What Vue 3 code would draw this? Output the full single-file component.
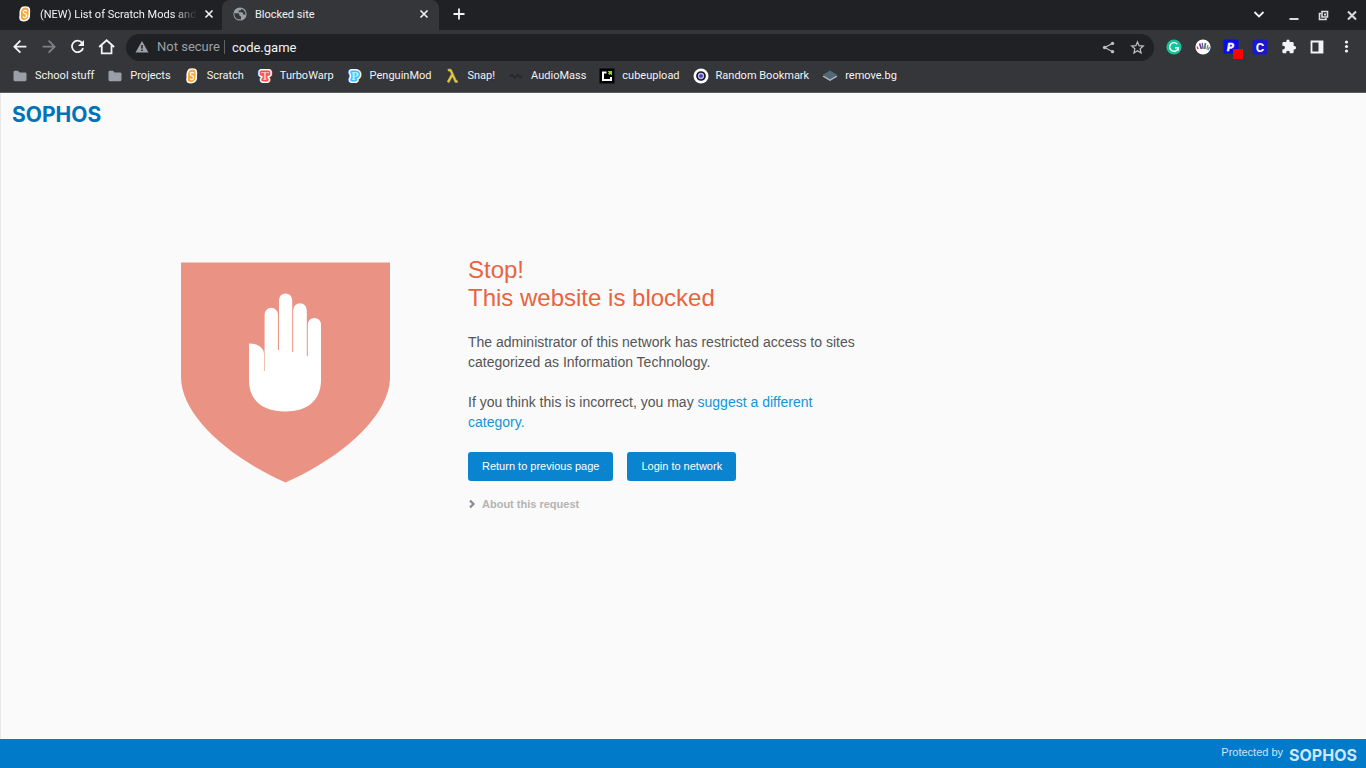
<template>
  <div class="browser">
    <header class="chrome">
      <div class="tab-strip">
        <div class="tab tab-first">
          <svg class="icon" viewBox="0 0 16 16" v-html="icons.scratch"></svg>
          <span class="tab-title fade">(NEW) List of Scratch Mods and</span>
          <button class="tab-close" aria-label="Close tab">
            <svg viewBox="0 0 10 10"><path d="M1.5 1.5l7 7M8.5 1.5l-7 7" stroke="#f1f3f4" stroke-width="1.6" /></svg>
          </button>
        </div>
        <div class="tab active">
          <svg class="icon" viewBox="0 0 16 16" v-html="icons.globe"></svg>
          <span class="tab-title">Blocked site</span>
          <button class="tab-close" aria-label="Close tab">
            <svg viewBox="0 0 10 10"><path d="M1.5 1.5l7 7M8.5 1.5l-7 7" stroke="#f1f3f4" stroke-width="1.6" /></svg>
          </button>
        </div>
        <button class="new-tab" aria-label="New tab">
          <svg viewBox="0 0 12 12"><path d="M6 0.5v11M0.5 6h11" stroke="#f1f3f4" stroke-width="1.8" /></svg>
        </button>
        <div class="window-controls">
          <button v-for="c in windowControls" :key="c.label" :class="{ wide: c.wide }" :aria-label="c.label">
            <svg viewBox="0 0 16 16" v-html="c.icon"></svg>
          </button>
        </div>
      </div>

      <div class="toolbar">
        <div class="nav">
          <button v-for="n in navButtons" :key="n.label" :aria-label="n.label">
            <svg viewBox="0 0 24 24" v-html="n.icon"></svg>
          </button>
        </div>
        <div class="omnibox">
          <svg class="warn" viewBox="0 0 14 14">
            <path d="M7 1L13.5 12.5H0.5Z" fill="#9aa0a6" />
            <path d="M7 5v3.500M7 9.6v1.5" stroke="#202124" stroke-width="1.5" />
          </svg>
          <span class="not-secure">Not secure</span>
          <input v-model="address" class="address" type="text" aria-label="Address">
          <button aria-label="Share">
            <svg viewBox="0 0 16 16">
              <path d="M12.5 3.5L4 8l8.5 4.5" fill="none" stroke="#bdc1c6" stroke-width="1.3" />
              <circle cx="12.3" cy="3.6" r="1.8" fill="#bdc1c6" />
              <circle cx="3.8" cy="8" r="1.8" fill="#bdc1c6" />
              <circle cx="12.3" cy="12.4" r="1.8" fill="#bdc1c6" />
            </svg>
          </button>
          <button aria-label="Bookmark this tab">
            <svg viewBox="0 0 16 16">
              <path d="M8 2l1.7 4.1 4.500 .4-3.400 2.900 1 4.400L8 11.5l-3.800 2.300 1-4.400L1.800 6.500l4.500-.4z" fill="none" stroke="#bdc1c6" stroke-width="1.3" />
            </svg>
          </button>
        </div>
        <div class="extensions">
          <button v-for="e in extensions" :key="e.label" :aria-label="e.label">
            <svg viewBox="0 0 16 16" v-html="e.icon"></svg>
            <span v-if="e.badge" class="badge"></span>
          </button>
        </div>
      </div>

      <nav class="bookmarks">
        <a v-for="b in bookmarks" :key="b.title" href="#">
          <svg class="icon" viewBox="0 0 16 16" v-html="icons[b.icon]"></svg>
          <span>{{ b.title }}</span>
        </a>
      </nav>
    </header>

    <main class="page">
      <div class="logo">SOPHOS</div>
      <div class="content">
        <svg class="shield" viewBox="181 262 209 221">
          <path d="M181 262.500H390V377C390 415 343 457 285.500 482.500C228 457 181 415 181 377Z" fill="#ea9384" />
          <path
            fill="#fff"
            d="M249 343.500C258 343.500 264 348 264 354V371H264.600V314.500a6.600 6.600 0 0 1 13.300 0V350H279V300a6.600 6.600 0 0 1 13.200 0V352H293.200V310a6.700 6.700 0 0 1 13.600 0V356H307.800V324.500a6.600 6.600 0 0 1 13.200 0V380C321 400 308 411.500 285 411.500S249 400 249 380Z"
          />
        </svg>
        <div class="message">
          <h1>Stop!<br>This website is blocked</h1>
          <p>The administrator of this network has restricted access to sites categorized as Information Technology.</p>
          <p>If you think this is incorrect, you may <a href="#">suggest a different category.</a></p>
          <div class="actions">
            <button>Return to previous page</button>
            <button>Login to network</button>
          </div>
          <button class="about" :aria-expanded="showDetails" @click="showDetails = !showDetails">
            <svg viewBox="0 0 8 10"><path d="M2 1.500L5.500 5 2 8.500" fill="none" stroke="#858b93" stroke-width="2.2" /></svg>
            About this request
          </button>
        </div>
      </div>
    </main>

    <footer class="footer">
      <span>Protected by</span>
      <span class="footer-logo">SOPHOS</span>
    </footer>
  </div>
</template>

<script setup>
import { ref } from 'vue'

const address = ref('code.game')
const showDetails = ref(false)

const serif = 'x="8" y="12" font-size="12" font-family="Liberation Serif, serif" font-weight="bold" text-anchor="middle" stroke-linejoin="round" paint-order="stroke"'
const sans = 'font-family="Roboto, sans-serif" font-weight="bold" text-anchor="middle"'

// letter with a coloured border and a thick white edge round it
const outlined = (char, color, fill) =>
  `<text ${serif} fill="#fff" stroke="#fff" stroke-width="6" aria-hidden="true">${char}</text>` +
  `<text ${serif} fill="${fill}" stroke="${color}" stroke-width="3">${char}</text>`

const icons = {
  folder: '<path d="M1.5 4.200q0-1.400 1.300-1.400H6l1.500 1.700h5.700q1.300 0 1.300 1.300v6q0 1.400-1.300 1.400H2.800q-1.300 0-1.300-1.400z" fill="#9aa0a6"/>',
  scratch: '<path d="M5 .8Q8 -.3 11.500 .8Q13.500 2 13.200 5.500L13 8Q13.500 13 10.500 14.500Q7 16.500 3.500 14.800Q1.600 13 2.500 9.500Q2 3 5 .8Z" fill="#fff"/><path d="M6 2.200Q8.500 1 10.800 2.200Q12 3.200 11.600 6L11.500 9Q11.500 12.500 9.500 13.300Q7 14.500 4.500 13.500Q3.300 12 4 9Q3.500 4 6 2.200Z" fill="#f9a73b"/><path d="M10 5.500Q9 3.800 7.300 4.500Q5.700 5.700 6.700 7L9 8.200Q10.300 10 8.800 11.300Q7 12 5.800 10.700" fill="none" stroke="#fff" stroke-width="1.2"/>',
  turbo: outlined('T', '#ff4c4c', '#ffc4c4'),
  penguin: outlined('P', '#2fc5ff', '#c2efff'),
  snap: '<path d="M4 2.500Q6.500 1 7.500 4L11.500 13Q12 14 13.500 13M8 7L4 14.500" fill="none" stroke="#8c8c8c" stroke-width="2.8"/><path d="M4 2.500Q6.500 1 7.500 4L11.500 13Q12 14 13.500 13M8 7L4 14" fill="none" stroke="#e8c91c" stroke-width="1.700"/>',
  wave: '<path d="M2 9Q3.500 5 5 8T8 9Q9.500 5 11 8T14 7.500" fill="none" stroke="#202326" stroke-width="1.3"/>',
  cube: '<path d="M.5 .5h15v15H.5z" fill="#000"/><path d="M7.500 4.500H4v7.500h8V9" fill="none" stroke="#fff" stroke-width="2"/><path d="M8.500 3h4.500v4.500l-1.500-1.500-1 1-1.500-1.500 1-1z" fill="#8ee000"/>',
  random: '<circle cx="8" cy="8" r="7.500" fill="#fff"/><circle cx="8" cy="8" r="4" fill="#b9b4f5" stroke="#17171c" stroke-width="1.7"/><circle cx="8" cy="8" r="1.8" fill="#4636bc"/>',
  layers: '<path d="M.5 8.500L8 4l7.500 4.500L8 13z" fill="#b5bcc2"/><path d="M.5 7L8 2.500 15.500 7 8 11.500z" fill="#526879"/>',
  globe: '<circle cx="8" cy="8" r="6.600" fill="#9aa0a6"/><path d="M2.300 7.300h3.700q1.300 0 1.300 1.300v1q1.700 0 1.700 1.700v1.900q-4.500 .8-6.300-3z" fill="#35363a"/><path d="M9.500 2.700q0 1.800-1.500 1.800H6.700v1.700h3.200q1 0 1 1.200v1.200h1.200q1 0 1.200 .9 .8-4.700-3.800-6.800z" fill="#35363a"/>'
}

const windowControls = [
  { label: 'Search tabs', wide: true, icon: '<path d="M3.500 5L8 9.500l4.500-4.500" fill="none" stroke="#f1f3f4" stroke-width="1.8"/>' },
  { label: 'Minimize', icon: '<path d="M3.500 12h9" stroke="#dadce0" stroke-width="2"/>' },
  { label: 'Restore', icon: '<path d="M6 6.500H4.500v6H11V11M7 4.500h5.500V10H7z" fill="none" stroke="#dadce0" stroke-width="1.6"/><path d="M9 6.500h2v2H9z" fill="#dadce0"/>' },
  { label: 'Close', icon: '<path d="M4 4.500l8 8M12 4.500l-8 8" stroke="#dadce0" stroke-width="2"/>' }
]

const navButtons = [
  { label: 'Back', icon: '<path d="M20.500 11.500H5M12.500 3.500l-8 8 8 8" fill="none" stroke="#f1f3f4" stroke-width="2.400"/>' },
  { label: 'Forward', icon: '<path d="M3.500 11.500H19M11.500 3.500l8 8-8 8" fill="none" stroke="#7d8085" stroke-width="2.400"/>' },
  { label: 'Reload', icon: '<path d="M17.500 6.500A7.600 7.600 0 1 0 18.800 13.500" fill="none" stroke="#f1f3f4" stroke-width="2.400"/><path d="M20 2.500v8h-8z" fill="#f1f3f4"/>' },
  { label: 'Home', icon: '<path d="M1.500 12L11.500 3l10 9M5 10v10.500h13V10" fill="none" stroke="#f1f3f4" stroke-width="2.400"/>' }
]

const extensions = [
  { label: 'Grammarly', icon: '<circle cx="8" cy="8" r="7.600" fill="#15c39a"/><path d="M11.300 5.200A4.300 4.300 0 1 0 12.200 8.800H9M12.200 8.800v3" fill="none" stroke="#fff" stroke-width="1.4"/>' },
  { label: 'Hands', icon: '<circle cx="8" cy="8" r="7.600" fill="#fff"/><path d="M2 7.500l1.200 2.700" stroke="#d8434e" stroke-width="1.5"/><path d="M4.500 4.500l2 5.500" stroke="#6b3a9b" stroke-width="1.8"/><path d="M7.200 3.800l.9 6" stroke="#77479e" stroke-width="1.3"/><path d="M10.400 4l-.7 6" stroke="#2c9561" stroke-width="1.8"/><path d="M13 6l-1.200 4.500" stroke="#dd5661" stroke-width="1.2"/><path d="M14.500 8l-1.500 3" stroke="#3b8fc0" stroke-width="1.2"/>' },
  { label: 'P extension', badge: true, icon: `<path d="M.5 .5h15v14H.5z" fill="#0b0be8"/><text x="7.500" y="11.500" font-size="11" font-style="italic" fill="#fff" stroke="#fff" stroke-width=".5" ${sans}>P</text>` },
  { label: 'C extension', icon: `<rect x=".5" y=".5" width="15" height="15" rx="2.500" fill="#1b16cf"/><text x="8" y="12.500" font-size="13" fill="#fff" ${sans}>C</text>` },
  { label: 'Extensions', icon: '<path d="M13.400 7H12.700V4.300q0-1.300-1.300-1.300H8.700v-.8a1.700 1.700 0 0 0-3.400 0V3H2.700q-1.300 0-1.300 1.300v2.500h.8a1.800 1.800 0 0 1 0 3.600h-.8V13q0 1.300 1.300 1.300h2.500v-.8a1.800 1.800 0 0 1 3.600 0v.8h2.600q1.300 0 1.300-1.300v-2.600h.7a1.700 1.700 0 0 0 0-3.400z" fill="#f1f3f4"/>' },
  { label: 'Side panel', icon: '<path d="M2.500 2.500h11v11h-11z" fill="none" stroke="#f1f3f4" stroke-width="1.8"/><path d="M9.500 2.500h4v11h-4z" fill="#f1f3f4"/>' },
  { label: 'Menu', icon: '<g fill="#f1f3f4"><circle cx="8.500" cy="3" r="1.600"/><circle cx="8.500" cy="7.500" r="1.600"/><circle cx="8.500" cy="12" r="1.600"/></g>' }
]

const bookmarks = [
  { title: 'School stuff', icon: 'folder' },
  { title: 'Projects', icon: 'folder' },
  { title: 'Scratch', icon: 'scratch' },
  { title: 'TurboWarp', icon: 'turbo' },
  { title: 'PenguinMod', icon: 'penguin' },
  { title: 'Snap!', icon: 'snap' },
  { title: 'AudioMass', icon: 'wave' },
  { title: 'cubeupload', icon: 'cube' },
  { title: 'Random Bookmark', icon: 'random' },
  { title: 'remove.bg', icon: 'layers' }
]
</script>

<style>
body {
  background: #fafafa;
}
</style>

<style scoped>
* {
  box-sizing: border-box;
}

.browser {
  display: flex;
  flex-direction: column;
  min-height: 100vh;
  font-family: "Liberation Sans", Arial, sans-serif;
}

button {
  padding: 0;
  border: 0;
  background: none;
  font-family: inherit;
  cursor: pointer;
}

svg {
  display: block;
  flex: none;
}

.icon {
  width: 16px;
  height: 16px;
}

.chrome {
  background: #35363a;
  border-bottom: 1px solid #5b5c60;
  color: #f1f3f4;
  font-family: Roboto, sans-serif;
  font-size: 11px;
}

.tab-strip {
  display: flex;
  height: 30px;
  background: #202124;
}

.tab {
  display: flex;
  align-items: center;
  gap: 7px;
  width: 217px;
  padding: 0 10px 2px;
}

.tab-first {
  width: 222px;
  padding: 0 8px 2px 17px;
}

.tab.active {
  background: #35363a;
  border-radius: 8px 8px 0 0;
}

.tab-title {
  flex: 1;
  overflow: hidden;
  white-space: nowrap;
}

.tab-title.fade {
  mask-image: linear-gradient(to right, #000 85%, transparent);
}

.tab-close {
  padding: 5px 0;
}

.tab-close svg {
  width: 10px;
  height: 10px;
}

.new-tab {
  padding: 0 14px 2px;
}

.new-tab svg {
  width: 12px;
  height: 12px;
}

.window-controls {
  display: flex;
  margin-left: auto;
}

.window-controls button {
  width: 29px;
  display: flex;
  align-items: center;
  justify-content: center;
}

.window-controls button.wide {
  width: 41px;
}

.window-controls svg {
  width: 16px;
  height: 16px;
}

.toolbar {
  display: flex;
  align-items: center;
  height: 34px;
}

.nav {
  display: flex;
  gap: 1px;
  padding: 0 5px 0 6px;
}

.nav button,
.extensions button {
  display: flex;
  align-items: center;
  justify-content: center;
  width: 28px;
  height: 28px;
}

.nav svg {
  width: 18px;
  height: 18px;
}

.omnibox {
  display: flex;
  flex: 1;
  align-items: center;
  height: 27px;
  padding: 0 2px 0 9px;
  border-radius: 14px;
  background: #202124;
  font-size: 13px;
}

.omnibox button {
  padding: 0 7px;
}

.omnibox button svg {
  width: 15px;
  height: 15px;
}

.omnibox .warn {
  width: 14px;
  height: 14px;
}

.not-secure {
  margin-left: 8px;
  padding-right: 4px;
  border-right: 1px solid #5f6368;
  color: #9aa0a6;
  line-height: 14px;
}

.address {
  flex: 1;
  min-width: 0;
  padding: 0 7px;
  border: 0;
  outline: 0;
  background: none;
  color: #f1f3f4;
  font-family: inherit;
  font-size: 13px;
}

.extensions {
  display: flex;
  justify-content: space-between;
  width: 212px;
  padding: 0 6px;
}

.extensions button {
  position: relative;
}

.extensions svg {
  width: 16px;
  height: 16px;
}

.badge {
  position: absolute;
  right: 2px;
  bottom: 2px;
  width: 10px;
  height: 10px;
  background: #f00;
}

.bookmarks {
  display: flex;
  align-items: center;
  gap: 13px;
  height: 28px;
  padding: 0 12px 5px;
}

.bookmarks a {
  display: flex;
  align-items: center;
  gap: 7px;
  color: inherit;
  text-decoration: none;
  white-space: nowrap;
}

.bookmarks span {
  padding-bottom: 1px;
}

.page {
  flex: 1;
  padding: 10px 11px;
  border-left: 1px solid #e8e8e8;
  background: #fafafa;
}

.logo {
  color: #0072ba;
  font-family: Inter, sans-serif;
  font-size: 21px;
  font-weight: 700;
  line-height: 24px;
}

.content {
  display: flex;
  gap: 78px;
  padding: 129px 0 0 169px;
}

.shield {
  width: 209px;
  height: 221px;
  margin-top: 6px;
}

.message {
  width: 400px;
  color: #555;
  font-size: 14px;
  line-height: 20px;
}

h1 {
  margin: 0 0 20px;
  color: #e8643f;
  font-size: 24px;
  font-weight: 400;
  line-height: 28px;
}

p {
  margin: 0 0 20px;
}

p a {
  color: #1195d8;
  text-decoration: none;
}

.actions {
  display: flex;
  gap: 14px;
}

.actions button {
  height: 29px;
  padding: 0 14px 2px;
  border-radius: 3px;
  background: #0a84cf;
  color: #fff;
  font-size: 11px;
}

.about {
  display: flex;
  align-items: center;
  gap: 6px;
  margin-top: 17px;
  color: #b3b3b3;
  font-size: 11px;
  font-weight: 700;
}

.about svg {
  width: 8px;
  height: 10px;
}

.footer {
  display: flex;
  justify-content: flex-end;
  align-items: center;
  gap: 6px;
  height: 29px;
  padding: 0 9px;
  background: #007ac9;
  color: #cfe6f6;
  font-size: 11px;
}

.footer span {
  padding-bottom: 4px;
}

.footer .footer-logo {
  padding: 3px 0 0;
  font-family: Inter, sans-serif;
  font-size: 16px;
  font-weight: 700;
}
</style>
